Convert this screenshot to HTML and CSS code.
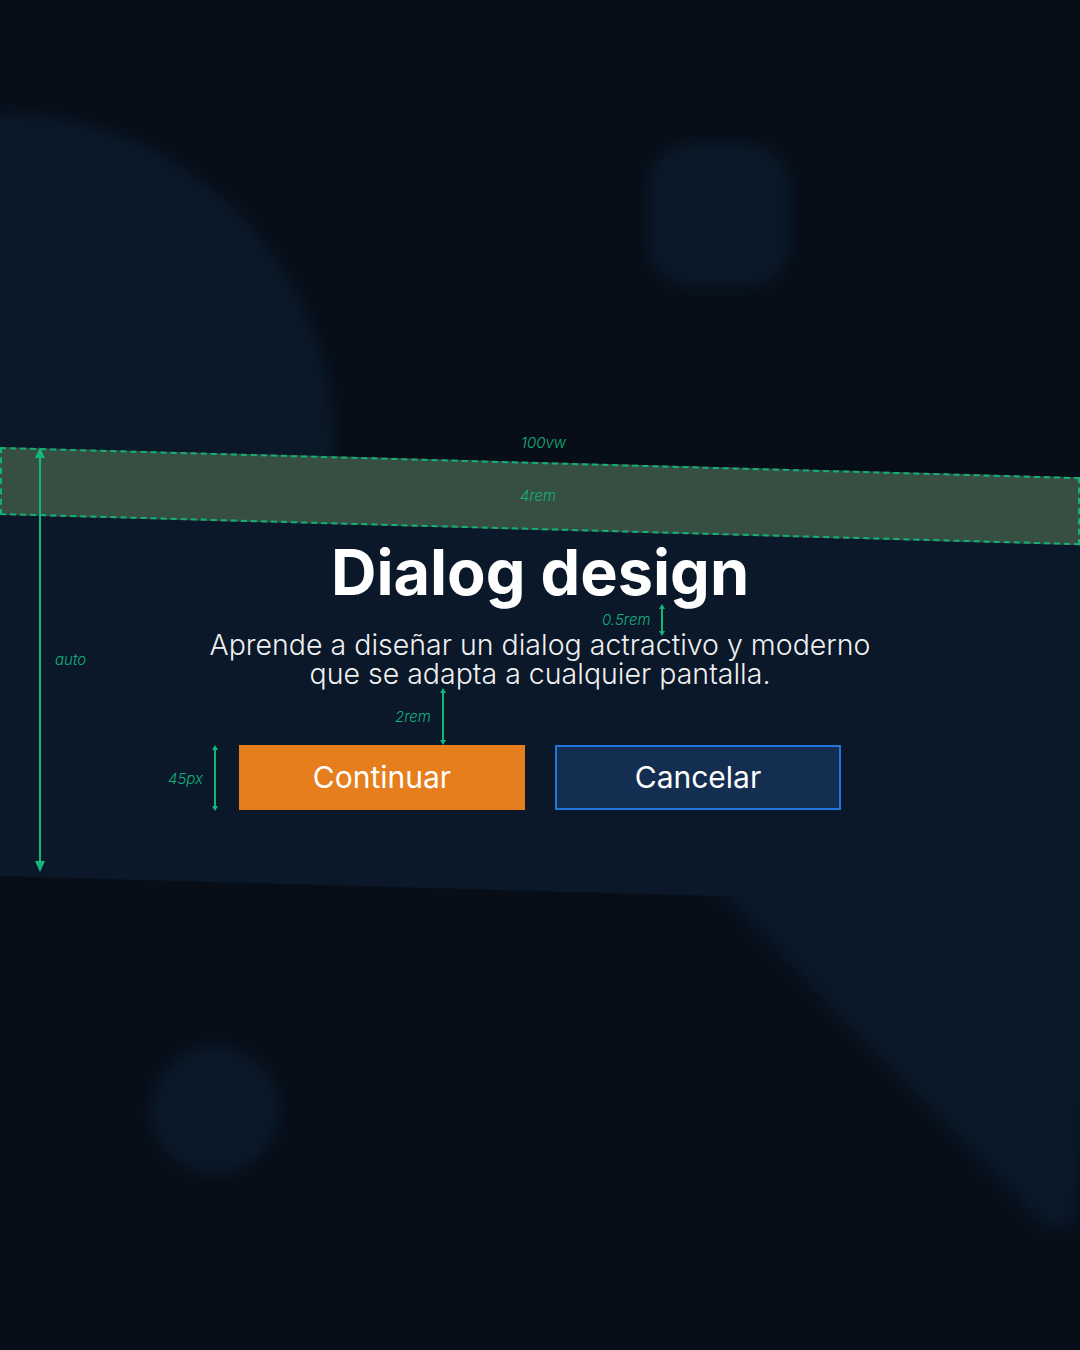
FILE: index.html
```html
<!DOCTYPE html>
<html lang="es">
<head>
<meta charset="utf-8">
<title>Dialog design</title>
<link rel="stylesheet" href="styles.css">
</head>
<body>
<div class="page">
  <div class="deco">
    <div class="blob blob-quarter"></div>
    <div class="blob blob-square"></div>
    <div class="blob blob-circle"></div>
    <div class="blob blob-tri"></div>
  </div>

  <section class="dialog">
    <div class="band">
      <span class="note note-vw">100vw</span>
      <span class="note note-rem4">4rem</span>
    </div>
    <h1 class="title">Dialog design</h1>
    <p class="subtitle">Aprende a diseñar un dialog actractivo y moderno<br>que se adapta a cualquier pantalla.</p>
    <div class="actions">
      <button class="btn btn-primary">Continuar</button>
      <button class="btn btn-secondary">Cancelar</button>
    </div>

    <div class="measure m-auto">
      <svg class="arrow" width="12" height="425" viewBox="0 0 12 425"><line x1="6" y1="4" x2="6" y2="421" stroke="#12b87a" stroke-width="2"/><polygon points="6,0 1,11 11,11" fill="#12b87a"/><polygon points="6,425 1,414 11,414" fill="#12b87a"/></svg>
      <span class="note">auto</span>
    </div>
    <div class="measure m-half">
      <span class="note">0.5rem</span>
      <svg class="arrow" width="8" height="32" viewBox="0 0 8 32"><line x1="4" y1="2" x2="4" y2="30" stroke="#12b87a" stroke-width="2"/><polygon points="4,0 1,5 7,5" fill="#12b87a"/><polygon points="4,32 1,27 7,27" fill="#12b87a"/></svg>
    </div>
    <div class="measure m-2rem">
      <span class="note">2rem</span>
      <svg class="arrow" width="8" height="57" viewBox="0 0 8 57"><line x1="4" y1="2" x2="4" y2="55" stroke="#12b87a" stroke-width="2"/><polygon points="4,0 1,5 7,5" fill="#12b87a"/><polygon points="4,57 1,52 7,52" fill="#12b87a"/></svg>
    </div>
    <div class="measure m-45">
      <span class="note">45px</span>
      <svg class="arrow" width="8" height="66" viewBox="0 0 8 66"><line x1="4" y1="2" x2="4" y2="64" stroke="#12b87a" stroke-width="2"/><polygon points="4,0 1,5 7,5" fill="#12b87a"/><polygon points="4,66 1,61 7,61" fill="#12b87a"/></svg>
    </div>
  </section>
</div>
</body>
</html>
```
FILE: styles.css
```css
* { box-sizing: border-box; }

html, body {
  margin: 0;
  padding: 0;
}

body {
  background: #070e18;
  font-family: Inter, "Open Sans", "DejaVu Sans", sans-serif;
  color: #ffffff;
}

.page {
  position: relative;
  width: 1080px;
  height: 1350px;
  overflow: hidden;
  padding-top: 447px;
}

/* decorative background shapes */
.deco {
  position: absolute;
  inset: 0;
  pointer-events: none;
}

.blob {
  position: absolute;
  background: #0a1828;
  filter: blur(7px);
}

.blob-quarter {
  left: -335px;
  top: 112px;
  width: 670px;
  height: 670px;
  border-radius: 50%;
}

.blob-square {
  left: 648px;
  top: 143px;
  width: 142px;
  height: 145px;
  border-radius: 42px;
}

.blob-circle {
  left: 150px;
  top: 1045px;
  width: 130px;
  height: 130px;
  border-radius: 50%;
}

.blob-tri {
  left: 590px;
  top: 760px;
  width: 530px;
  height: 500px;
  background: transparent;
  filter: blur(8px);
}

.blob-tri::before {
  content: "";
  position: absolute;
  inset: 0;
  background: #0a1828;
  clip-path: polygon(0 0, 100% 0, 92% 93%, 86% 94%);
}

/* dialog */
.dialog {
  position: relative;
  height: 425px;
  display: flex;
  flex-direction: column;
  align-items: center;
}

.dialog::before {
  content: "";
  position: absolute;
  inset: 0 0 -4px 0;
  background: #0a1829;
  transform: skewY(1.6deg);
  transform-origin: 0 0;
}

.band {
  position: relative;
  width: 100%;
  height: 68px;
  flex: none;
}

.band::before {
  content: "";
  position: absolute;
  inset: 0;
  background: #374f42;
  border: 2px dashed #12b07a;
  transform: skewY(1.6deg);
  transform-origin: 0 0;
}

.note {
  font-family: Inter, "Open Sans", sans-serif;
  font-style: italic;
  font-weight: 300;
  font-size: 15px;
  color: #12b07a;
  line-height: 1;
  white-space: nowrap;
}

.band .note {
  position: absolute;
  z-index: 1;
}

.note-vw { left: 521px; top: -12px; }
.note-rem4 { left: 520px; top: 41px; }

.title {
  position: relative;
  margin: 26px 0 0;
  font-family: Inter, "Open Sans", sans-serif;
  font-weight: 700;
  font-size: 63px;
  line-height: 62px;
  letter-spacing: 0;
  color: #ffffff;
}

.subtitle {
  position: relative;
  margin: 27px 0 0;
  font-weight: 300;
  font-size: 28.5px;
  line-height: 29px;
  text-align: center;
  color: #f0f0f0;
}

.actions {
  position: relative;
  display: flex;
  gap: 30px;
  margin-top: 57px;
}

.btn {
  width: 286px;
  height: 65px;
  padding: 0 0 2px;
  font-family: Inter, "Open Sans", sans-serif;
  font-size: 30px;
  font-weight: 400;
  color: #ffffff;
  border: 0;
  cursor: pointer;
}

.btn-primary {
  background: #e67e1e;
}

.btn-secondary {
  background: #132e50;
  border: 2px solid #1e78dc;
}

/* measurement annotations (overlays) */
.measure {
  position: absolute;
  display: flex;
  align-items: center;
  gap: 9px;
}

.measure .arrow { display: block; flex: none; }

.m-auto { left: 34px; top: 0; }

.m-half {
  left: 602px;
  top: 157px;
  gap: 7px;
  height: 24px;
  align-items: flex-start;
}

.m-half .note { margin-top: 8px; }

.m-2rem { left: 395px; top: 241px; gap: 8px; }
.m-45 { left: 168px; top: 298px; gap: 8px; }
```
